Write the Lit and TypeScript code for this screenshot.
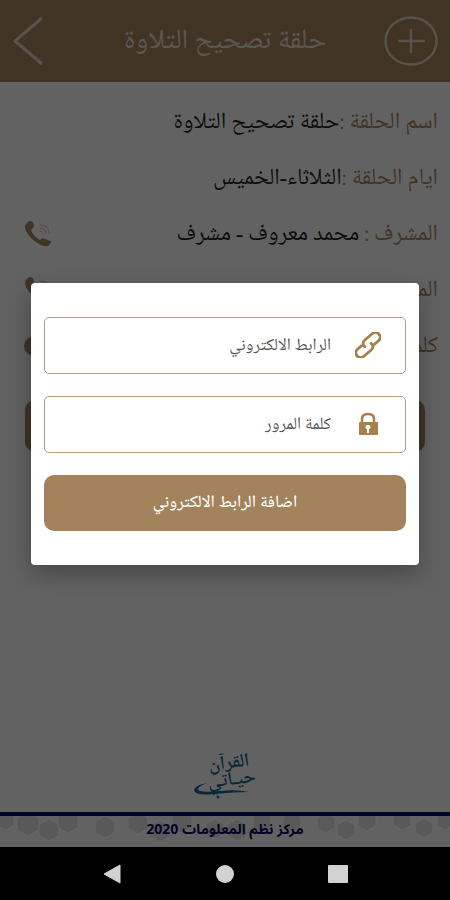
import { LitElement, html, css, svg } from "lit";
import { customElement } from "lit/decorators.js";

const phoneIcon = html`<svg width="28" height="28" viewBox="0 0 28 28" aria-hidden="true">
  <path d="M2 4 Q4 1 6 1 Q9 1 10 5 Q10 8 7 10 Q9 16 16 20 Q18 17 21 19 L26 21 Q28 22 26 24 L24 26 Q20 27 15 24 Q6 19 2 11 Q0 6 2 4Z" fill="currentColor"/>
  <g fill="none" stroke="currentColor" stroke-width="1" opacity=".45">
    <path d="M16 11 Q19 11 19 14"/><path d="M16 8 Q22 8 22 14"/><path d="M16 5 Q25 5 25 13"/>
  </g></svg>`;

const hexes: [number, number, number][] = [
  [6, 5, 9], [28, 8, 12], [49, 14, 11], [68, 6, 11], [105, 11, 11], [138, 7, 11], [160, 15, 11],
  [182, 6, 11], [215, 13, 10], [237, 14, 11], [262, 6, 10], [292, 6, 10], [326, 7, 10],
  [346, 14, 10], [367, 5, 10], [402, 4, 10], [424, 12, 10], [445, 5, 9],
];

@customElement("app-root")
export class AppRoot extends LitElement {
  static styles = css`
    :host {
      display: flex;
      flex-direction: column;
      min-height: 100vh;
      background: #000;
      font-family: "Noto Naskh Arabic UI", "Noto Naskh Arabic", "Noto Sans Arabic", "DejaVu Sans", sans-serif;
    }
    * { box-sizing: border-box; }
    button { font: inherit; border: 0; padding: 0; background: none; color: inherit; }
    svg { display: block; flex: none; }
    .screen { position: relative; flex: 1; display: flex; flex-direction: column; background: #f5f5f5; }
    header {
      display: grid;
      grid-template-columns: 1fr auto 1fr;
      align-items: center;
      height: 82px;
      padding: 0 12px;
      background: #a3835c;
      color: #fff;
    }
    header button:last-child { justify-self: end; }
    header button:first-child { justify-self: start; }
    h1 { margin: 0; font-size: 28px; font-weight: 400; line-height: 32px; opacity: .7; white-space: nowrap; }
    .details { flex: 1; padding: 12px 12px 0; }
    .row {
      display: flex;
      align-items: center;
      justify-content: space-between;
      height: 56px;
      padding-left: 12px;
      font-size: 23px;
      line-height: 28px;
      color: #222;
    }
    .row p { margin: 0; white-space: nowrap; }
    .key { color: #a3835c; }
    .row button { color: #a3835c; }
    .dot { width: 28px; height: 20px; border-radius: 10px; background: #a3835c; }
    .action { display: block; width: calc(100% - 26px); height: 52px; margin: 26px 13px 0; border-radius: 10px; background: #a3835c; color: #fff; }
    .logo { display: flex; justify-content: center; height: 74px; }
    footer {
      position: relative;
      height: 35px;
      border-top: 4px solid #060a5c;
      overflow: hidden;
    }
    .pattern { width: 100%; height: 31px; }
    .credit {
      position: absolute;
      inset: 0;
      display: flex;
      align-items: center;
      justify-content: center;
      font-family: "Noto Sans Arabic", "Noto Sans", sans-serif;
      font-size: 14px;
      line-height: 20px;
      padding-bottom: 4px;
      font-weight: 700;
      color: #060a5c;
    }
    .scrim {
      position: absolute;
      inset: 0;
      display: flex;
      align-items: center;
      padding: 0 31px;
      background: rgba(0, 0, 0, .6);
    }
    .dialog {
      display: flex;
      flex-direction: column;
      gap: 22px;
      flex: 1;
      min-width: 0;
      padding: 34px 13px;
      border-radius: 4px;
      background: #fff;
      box-shadow: 0 8px 24px rgba(0, 0, 0, .3);
    }
    .field {
      display: flex;
      align-items: center;
      gap: 24px;
      height: 57px;
      padding: 0 24px;
      border: 1px solid #b59c80;
      border-radius: 5px;
      color: #a97f4c;
    }
    .field input {
      flex: 1;
      min-width: 0;
      height: 40px;
      padding: 0;
      border: 0;
      outline: 0;
      background: none;
      font: inherit;
      font-size: 17px;
      color: #444;
    }
    .field input::placeholder { color: #555; opacity: 1; }
    .submit { height: 56px; border-radius: 10px; background: #a3835c; color: #fff; font-size: 17px; font-weight: 500; }
    nav { display: flex; justify-content: space-around; align-items: center; height: 53px; padding: 0 56px; background: #000; color: #d2d2d2; }
  `;

  render() {
    return html`
      <div class="screen">
        <header>
          <button aria-label="رجوع"><svg width="32" height="50" viewBox="0 0 32 50" fill="none" stroke="#fff" stroke-opacity=".6" stroke-width="3"><path d="M30 2 L3 25 L30 48"/></svg></button>
          <h1 dir="rtl">حلقة تصحيح التلاوة</h1>
          <button aria-label="اضافة"><svg width="54" height="50" viewBox="0 0 54 50" fill="none" stroke="#fff" stroke-opacity=".6" stroke-width="2.500"><ellipse cx="27" cy="25" rx="25.500" ry="23.500"/><path d="M14 25H41M27 13V37"/></svg></button>
        </header>
        <main class="details">
          <div class="row"><span></span><p dir="rtl"><span class="key">اسم الحلقة :</span>حلقة تصحيح التلاوة</p></div>
          <div class="row"><span></span><p dir="rtl"><span class="key">ايام الحلقة :</span>الثلاثاء-الخميس</p></div>
          <div class="row"><button aria-label="اتصال">${phoneIcon}</button><p dir="rtl"><span class="key">المشرف :</span> محمد معروف - مشرف</p></div>
          <div class="row"><button aria-label="اتصال">${phoneIcon}</button><p dir="rtl"><span class="key">المدرس :</span></p></div>
          <div class="row"><span class="dot"></span><p dir="rtl"><span class="key">كلمة المرور :</span></p></div>
          <button class="action" aria-label="الرابط"></button>
        </main>
        <div class="logo">
          <svg width="90" height="74" viewBox="-10 -10 90 74" role="img" aria-label="القرآن حياتي">
            <g fill="#1c6291" font-family="Noto Naskh Arabic, DejaVu Sans, sans-serif" font-weight="600" direction="rtl">
              <text x="60" y="20" font-size="19" transform="rotate(-7 40 20)">القرآن</text>
              <text x="66" y="37" font-size="19" transform="rotate(-7 40 34)">حيـاتي</text>
            </g>
            <g fill="#1c6291"><path d="M17 35 Q5 37 4 42 Q5 48 24 46 Q45 44 59 44 Q46 41 30 43 Q8 45 8 41 Q9 38 17 35Z"/><circle cx="28" cy="49" r="1.500"/></g>
          </svg>
        </div>
        <footer>
          <svg class="pattern" viewBox="0 0 450 31" preserveAspectRatio="xMidYMid slice" aria-hidden="true">
            ${hexes.map(([x, y, r]) => svg`<path transform="translate(${x} ${y})" fill="#dfdfdf" stroke="#fff" stroke-width="1" d="M0 ${-r} L${r - 1} ${-r / 2} V${r / 2} L0 ${r} L${1 - r} ${r / 2} V${-r / 2} Z"/>`)}
          </svg>
          <div class="credit" dir="rtl">مركز نظم المعلومات 2020</div>
        </footer>
        <div class="scrim">
          <form class="dialog" role="dialog" aria-label="اضافة الرابط الالكتروني" dir="rtl" @submit=${(e: Event) => e.preventDefault()}>
            <label class="field">
              <svg width="26" height="26" viewBox="2 2 22 22" fill="none" stroke="currentColor" stroke-width="2.400" stroke-linecap="round" aria-hidden="true">
                <g transform="rotate(-40 13 13)">
                  <path d="M10 12.500Q9.500 8 14 8H21.500Q26 8 26 12Q26 16 21.500 16H17.500"/>
                  <path d="M16 13.500Q16.500 18 12 18H4.500Q0 18 0 14Q0 10 4.500 10H8.500"/>
                </g>
              </svg>
              <input type="text" aria-label="الرابط الالكتروني" placeholder="الرابط الالكتروني">
            </label>
            <label class="field">
              <svg width="26" height="26" viewBox="0 0 26 26" aria-hidden="true">
                <path d="M7 12V8Q7 3 13 3Q19 3 19 8V12" fill="none" stroke="currentColor" stroke-width="2.500"/>
                <rect x="4" y="11" width="19" height="13" rx="1" fill="currentColor"/>
                <path d="M13 14A2 2 0 0 1 14 18V22H12V18A2 2 0 0 1 13 14Z" fill="#fff"/>
              </svg>
              <input type="password" aria-label="كلمة المرور" placeholder="كلمة المرور">
            </label>
            <button class="submit">اضافة الرابط الالكتروني</button>
          </form>
        </div>
      </div>
      <nav>
        <button aria-label="Back"><svg width="20" height="20" viewBox="0 0 20 20"><path d="M2 10 L18 1 V19Z" fill="currentColor" stroke="currentColor" stroke-linejoin="round"/></svg></button>
        <button aria-label="Home"><svg width="20" height="20" viewBox="0 0 20 20"><circle cx="10" cy="10" r="9" fill="currentColor"/></svg></button>
        <button aria-label="Recent"><svg width="20" height="20" viewBox="0 0 20 20"><rect y="1" width="20" height="18" rx="1" fill="currentColor"/></svg></button>
      </nav>`;
  }
}
